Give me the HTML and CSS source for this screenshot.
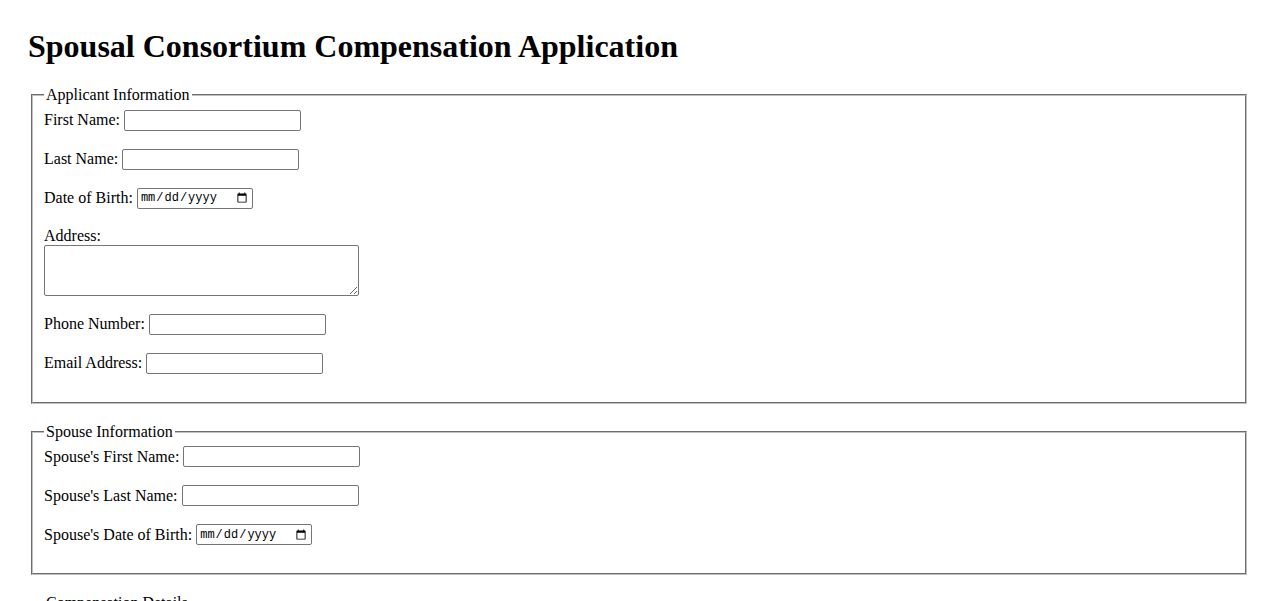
FILE: index.html
```html
<!DOCTYPE html>
<html lang="en">
<head>
<meta charset="utf-8">
<title>Spousal Consortium Compensation Application</title>
<link rel="stylesheet" href="styles.css">
</head>
<body>
<div class="page">
  <h1 class="title">Spousal Consortium Compensation Application</h1>
  <form class="app-form">
    <fieldset class="group">
      <legend class="group-legend">Applicant Information</legend>
      <div class="row"><label for="fn">First Name:</label><input class="text" id="fn" type="text"></div>
      <div class="row"><label for="ln">Last Name:</label><input class="text" id="ln" type="text"></div>
      <div class="row"><label for="dob">Date of Birth:</label><input class="date" id="dob" type="date"></div>
      <div class="row-block"><label class="block-label" for="addr">Address:</label><textarea class="area" id="addr"></textarea></div>
      <div class="row"><label for="ph">Phone Number:</label><input class="text" id="ph" type="tel"></div>
      <div class="row"><label for="em">Email Address:</label><input class="text" id="em" type="email"></div>
    </fieldset>
    <fieldset class="group">
      <legend class="group-legend">Spouse Information</legend>
      <div class="row"><label for="sfn">Spouse's First Name:</label><input class="text" id="sfn" type="text"></div>
      <div class="row"><label for="sln">Spouse's Last Name:</label><input class="text" id="sln" type="text"></div>
      <div class="row"><label for="sdob">Spouse's Date of Birth:</label><input class="date" id="sdob" type="date"></div>
    </fieldset>
    <fieldset class="group">
      <legend class="group-legend">Compensation Details</legend>
      <div class="row"><label for="dom">Date of Marriage:</label><input class="date" id="dom" type="date"></div>
      <div class="row-block"><label class="block-label" for="loss">Description of Loss:</label><textarea class="area" id="loss"></textarea></div>
      <div class="row"><label for="amt">Amount Requested:</label><input class="text" id="amt" type="number"></div>
    </fieldset>
    <button class="submit" type="submit">Submit Application</button>
  </form>
</div>
</body>
</html>
```
FILE: styles.css
```css
html, body {
  margin: 0;
  padding: 0;
  background: #ffffff;
}
body {
  font-family: "Liberation Serif", "Times New Roman", serif;
  font-size: 16px;
  color: #000000;
}
.page {
  padding: 28px 29px 40px 29px;
}
.title {
  font-size: 32px;
  font-weight: bold;
  margin: 0 0 21px -1px;
  line-height: 37px;
}
.group {
  margin: 0 2px 19px 2px;
  padding: 5.6px 12px 10px 11px;
  border: 2px groove rgb(192,192,192);
  min-width: 0;
}
.group-legend {
  padding: 0 2px;
  line-height: 18px;
}
.row {
  display: flex;
  align-items: center;
  gap: 4px;
  height: 21px;
  margin-bottom: 18px;
  line-height: 18px;
}
.row-block {
  margin-bottom: 18px;
}
.block-label {
  display: block;
  line-height: 18px;
}
.text, .date, .area {
  box-sizing: border-box;
  border: 1px solid #767676;
  border-radius: 2px;
  background: #ffffff;
  margin: 0;
}
.text {
  width: 177px;
  height: 21px;
  padding: 1px 2px;
  font-family: "Liberation Sans", Arial, sans-serif;
  font-size: 13.33px;
}
.date {
  width: 116px;
  height: 21px;
  padding: 1px 2px;
  font-family: "Liberation Mono", "Courier New", monospace;
  font-size: 12px;
  color: #000000;
}
.area {
  display: block;
  width: 315px;
  height: 51px;
  padding: 2px;
  font-family: "Liberation Mono", monospace;
  font-size: 13px;
  resize: both;
}
.submit {
  font-family: "Liberation Sans", Arial, sans-serif;
  font-size: 13.33px;
}
```
